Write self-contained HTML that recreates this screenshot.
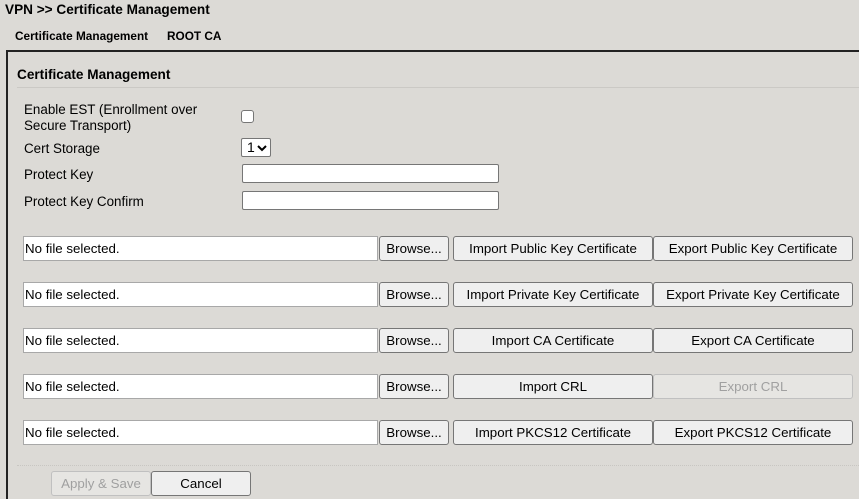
<!DOCTYPE html>
<html style="height:499px;overflow:hidden"><head><style>
body{margin:0;width:859px;height:499px;background:#dcdad6;font-family:"Liberation Sans",Arial,sans-serif;position:relative;overflow:hidden;color:#000}
.a{position:absolute;white-space:nowrap}
.t{font-size:14px;font-weight:bold}
.tab{font-size:11.8px;font-weight:bold}
.lbl{font-size:13.4px;line-height:16px}
.inp{position:absolute;background:#fff;border:1px solid #767676;border-radius:2px;box-sizing:border-box}
.file{position:absolute;background:#fff;border:1px solid #a8a8a8;box-sizing:border-box;font-size:13.3px;line-height:24px;padding-left:1px;width:355px;height:25px;left:23px}
.btn{position:absolute;background:#efefef;border:1px solid #767676;border-radius:3px;box-sizing:border-box;font-size:13.3px;text-align:center;height:25px;line-height:23px;white-space:nowrap}
.dis{color:#a0a0a0;border-color:#c0c0c0;background:#e6e5e2}
</style></head><body>
<div class="a t" style="left:5px;top:2px;font-size:13.6px">VPN &gt;&gt; Certificate Management</div>
<div class="a tab" style="left:15px;top:29px">Certificate Management</div>
<div class="a tab" style="left:167px;top:29px">ROOT CA</div>
<div class="a" style="left:6px;top:50px;width:860px;height:460px;border-left:2px solid #222;border-top:2px solid #222"></div>
<div class="a t" style="left:17px;top:67px;font-size:13.6px">Certificate Management</div>
<div class="a" style="left:17px;top:87px;width:842px;height:1px;background:#cbc9c5"></div>
<div class="a lbl" style="left:24px;top:102px">Enable EST (Enrollment over<br>Secure Transport)</div>
<div class="inp" style="left:241px;top:110px;width:13px;height:13px;border-radius:3px"></div>
<div class="a lbl" style="left:24px;top:141px">Cert Storage</div>
<div class="inp" style="left:241px;top:138px;width:30px;height:19px;font-size:14px;line-height:17px;padding-left:5px">1<svg style="position:absolute;left:15px;top:5px" width="10" height="8" viewBox="0 0 10 8"><path d="M1 2L5 6L9 2" stroke="#000" stroke-width="2" fill="none"/></svg></div>
<div class="a lbl" style="left:24px;top:167px">Protect Key</div>
<div class="inp" style="left:242px;top:164px;width:257px;height:19px"></div>
<div class="a lbl" style="left:24px;top:194px">Protect Key Confirm</div>
<div class="inp" style="left:242px;top:191px;width:257px;height:19px"></div>

<div class="file" style="top:236px">No file selected.</div>
<div class="btn" style="left:379px;top:236px;width:70px">Browse...</div>
<div class="btn" style="left:453px;top:236px;width:200px">Import Public Key Certificate</div>
<div class="btn" style="left:653px;top:236px;width:200px">Export Public Key Certificate</div>

<div class="file" style="top:282px">No file selected.</div>
<div class="btn" style="left:379px;top:282px;width:70px">Browse...</div>
<div class="btn" style="left:453px;top:282px;width:200px">Import Private Key Certificate</div>
<div class="btn" style="left:653px;top:282px;width:200px">Export Private Key Certificate</div>

<div class="file" style="top:328px">No file selected.</div>
<div class="btn" style="left:379px;top:328px;width:70px">Browse...</div>
<div class="btn" style="left:453px;top:328px;width:200px">Import CA Certificate</div>
<div class="btn" style="left:653px;top:328px;width:200px">Export CA Certificate</div>

<div class="file" style="top:374px">No file selected.</div>
<div class="btn" style="left:379px;top:374px;width:70px">Browse...</div>
<div class="btn" style="left:453px;top:374px;width:200px">Import CRL</div>
<div class="btn dis" style="left:653px;top:374px;width:200px">Export CRL</div>

<div class="file" style="top:420px">No file selected.</div>
<div class="btn" style="left:379px;top:420px;width:70px">Browse...</div>
<div class="btn" style="left:453px;top:420px;width:200px">Import PKCS12 Certificate</div>
<div class="btn" style="left:653px;top:420px;width:200px">Export PKCS12 Certificate</div>

<div class="a" style="left:17px;top:465px;width:842px;border-top:1px dotted #c8c6c2"></div>
<div class="btn dis" style="left:51px;top:471px;width:100px">Apply &amp; Save</div>
<div class="btn" style="left:151px;top:471px;width:100px">Cancel</div>
</body></html>
